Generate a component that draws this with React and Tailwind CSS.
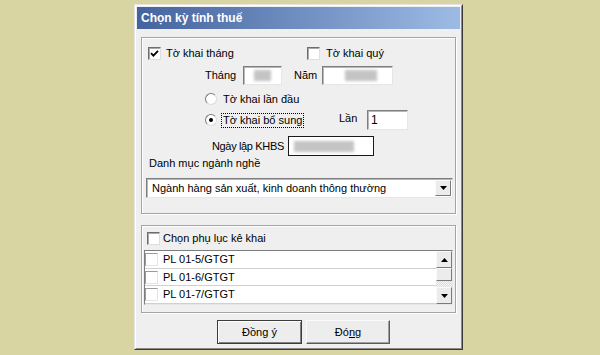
import React from "react";

const font = "font-['Liberation_Sans',Arial,sans-serif]";

function CheckBox({ checked, flat }) {
    const border = flat
        ? "border border-t-[#9a9a9a] border-l-[#9a9a9a] border-r-[#e4e4e4] border-b-[#e4e4e4]"
        : "border border-t-[#6e6e6e] border-l-[#6e6e6e] border-r-[#dedede] border-b-[#dedede] shadow-[inset_1px_1px_0_#a8a8a8]";
    return (
        <span className={"flex items-center justify-center w-[13px] h-[13px] shrink-0 bg-white " + border}>
            {checked && (
                <svg width="9" height="9" viewBox="0 0 9 9">
                    <path d="M1 4.2 L3.4 6.6 L8 1.8" stroke="#000" strokeWidth="1.8" fill="none" />
                </svg>
            )}
        </span>
    );
}

function Radio({ checked }) {
    return (
        <span className="flex items-center justify-center w-[12px] h-[12px] shrink-0 rounded-full bg-white border border-t-[#7a7a7a] border-l-[#7a7a7a] border-r-[#dcdcdc] border-b-[#dcdcdc]">
            {checked && <span className="w-[4px] h-[4px] rounded-full bg-black" />}
        </span>
    );
}

function Sunken({ className, children }) {
    return (
        <div className={"flex items-center bg-white border border-t-[#7d7d7d] border-l-[#7d7d7d] border-r-[#e6e6e6] border-b-[#e6e6e6] shadow-[inset_1px_1px_0_#b8b8b8] " + className}>
            {children}
        </div>
    );
}

function Blur({ className }) {
    return <div className={"h-[11px] bg-[#c4c4c4] blur-[1.5px] " + className} />;
}

function ArrowBtn({ dir, className }) {
    return (
        <div className={"flex items-center justify-center w-[16px] bg-[#ececec] border border-t-[#fafafa] border-l-[#fafafa] border-r-[#7a7a7a] border-b-[#7a7a7a] " + className}>
            <svg width="7" height="4" viewBox="0 0 7 4">
                {dir === "up" ? <path d="M0 4 L3.5 0 L7 4 Z" fill="#000" /> : <path d="M0 0 L7 0 L3.5 4 Z" fill="#000" />}
            </svg>
        </div>
    );
}

function Group({ className, children }) {
    return (
        <div className={"border border-[#a4a4a4] shadow-[inset_1px_1px_0_#fff,1px_1px_0_#fff] " + className}>
            {children}
        </div>
    );
}

function ListRow({ label }) {
    return (
        <div className="flex items-center h-[18px] border-b border-[#d0d0d0]">
            <CheckBox flat />
            <span className="ml-[5px]">{label}</span>
        </div>
    );
}

function Button({ children, isDefault }) {
    const cls = isDefault
        ? "border border-[#3c3c3c] shadow-[inset_1px_1px_0_#fff,inset_-1px_-1px_0_#808080]"
        : "border border-t-[#fafafa] border-l-[#fafafa] border-r-[#5a5a5a] border-b-[#5a5a5a] shadow-[inset_-1px_-1px_0_#a0a0a0]";
    return (
        <div className={"flex items-center justify-center h-[24px] bg-[#ededed] " + cls}>
            {children}
        </div>
    );
}

export default function App() {
    return (
        <div className={"w-[600px] h-[355px] bg-[#d9d5a3] pl-[134px] pt-[4px] text-[11px] text-black whitespace-nowrap " + font}>
            <div className="w-[329px] h-[346px] border border-t-[#e4e4e4] border-l-[#e4e4e4] border-r-[#3a3a3a] border-b-[#3a3a3a]">
                <div className="h-full bg-[#efefef] border border-t-[#fff] border-l-[#fff] border-r-[#8a8a8a] border-b-[#8a8a8a] p-[1px]">
                    <div className="h-[22px] flex items-center pl-[4px] bg-gradient-to-r from-[#45639e] to-[#9cbbe4] text-white font-bold text-[12px]">
                        Chọn kỳ tính thuế
                    </div>

                    <div className="px-[4px] pt-[8px]">
                        <Group className="h-[177px] flex flex-col">
                            <div className="flex items-center h-[16px] mt-[7px] pl-[6px]">
                                <label className="flex items-center w-[159px]">
                                    <CheckBox checked />
                                    <span className="ml-[5px]">Tờ khai tháng</span>
                                </label>
                                <label className="flex items-center">
                                    <CheckBox />
                                    <span className="ml-[6px]">Tờ khai quý</span>
                                </label>
                            </div>

                            <div className="flex items-center h-[19px] mt-[5px] pl-[63px]">
                                <span className="w-[38px]">Tháng</span>
                                <Sunken className="w-[39px] h-[19px] justify-center">
                                    <Blur className="w-[17px]" />
                                </Sunken>
                                <span className="ml-[12px] w-[28px]">Năm</span>
                                <Sunken className="w-[71px] h-[19px] pl-[22px]">
                                    <Blur className="w-[32px]" />
                                </Sunken>
                            </div>

                            <div className="flex items-center h-[14px] mt-[7px] pl-[63px]">
                                <Radio />
                                <span className="ml-[6px]">Tờ khai lần đầu</span>
                            </div>

                            <div className="flex items-center h-[20px] mt-[4px] pl-[63px]">
                                <div className="flex items-center w-[134px]">
                                    <Radio checked />
                                    <span className="ml-[4px] px-[1px] leading-[13px] border border-dotted border-black">Tờ khai bổ sung</span>
                                </div>
                                <span className="w-[28px] -mt-[4px]">Lần</span>
                                <Sunken className="w-[41px] h-[20px] pl-[3px] text-[12px]">1</Sunken>
                            </div>

                            <div className="flex items-center h-[20px] mt-[6px] pl-[70px]">
                                <span className="w-[76px] tracking-[-0.35px]">Ngày lập KHBS</span>
                                <div className="flex items-center w-[86px] h-[20px] bg-white border border-[#1a1a1a] pl-[5px]">
                                    <Blur className="w-[60px]" />
                                </div>
                            </div>

                            <div className="flex items-center h-[14px] pl-[7px]">Danh mục ngành nghề</div>

                            <div className="mt-[8px] ml-[4px]">
                                <Sunken className="w-[307px] h-[20px] justify-between pl-[5px] pr-[1px]">
                                    <span>Ngành hàng sản xuất, kinh doanh thông thường</span>
                                    <ArrowBtn dir="down" className="h-[16px]" />
                                </Sunken>
                            </div>
                        </Group>

                        <Group className="h-[88px] mt-[11px] flex flex-col">
                            <label className="flex items-center h-[13px] mt-[6px] pl-[5px]">
                                <CheckBox />
                                <span className="ml-[3px]">Chọn phụ lục kê khai</span>
                            </label>
                            <div className="mt-[5px] ml-[2px] w-[309px] h-[55px] flex bg-white border border-t-[#7d7d7d] border-l-[#7d7d7d] border-r-[#e6e6e6] border-b-[#e6e6e6]">
                                <div className="flex-1 flex flex-col">
                                    <ListRow label="PL 01-5/GTGT" />
                                    <ListRow label="PL 01-6/GTGT" />
                                    <ListRow label="PL 01-7/GTGT" />
                                </div>
                                <div className="w-[16px] flex flex-col bg-[repeating-conic-gradient(#f4f4f4_0_25%,#dcdcdc_0_50%)] bg-[length:2px_2px]">
                                    <ArrowBtn dir="up" className="h-[17px]" />
                                    <div className="h-[13px] bg-[#ececec] border border-t-[#fafafa] border-l-[#fafafa] border-r-[#7a7a7a] border-b-[#7a7a7a]" />
                                    <div className="flex-1" />
                                    <ArrowBtn dir="down" className="h-[17px]" />
                                </div>
                            </div>
                        </Group>

                        <div className="flex mt-[7px] ml-[76px] gap-[4px]">
                            <div className="w-[85px]">
                                <Button isDefault>Đồng ý</Button>
                            </div>
                            <div className="w-[84px]">
                                <Button>Đó<span className="underline">n</span>g</Button>
                            </div>
                        </div>
                    </div>
                </div>
            </div>
        </div>
    );
}
